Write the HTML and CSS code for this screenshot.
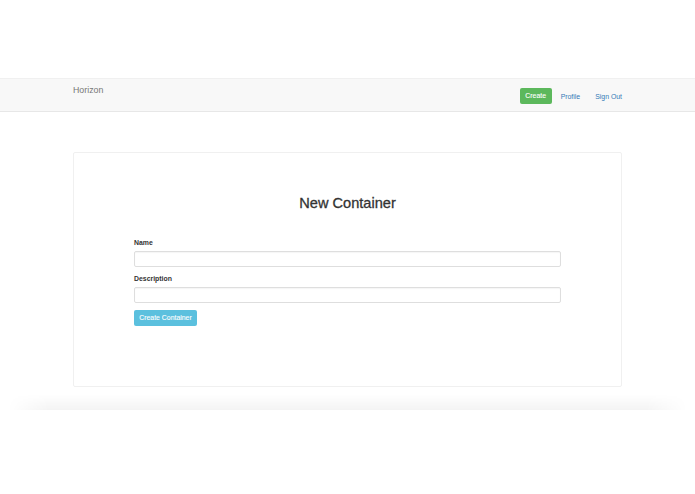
FILE: index.html
```
<!DOCTYPE html>
<html lang="en">
<head>
    <meta charset="UTF-8">
    <meta name="viewport" content="width=device-width, initial-scale=1.0">
    <title>Horizon</title>
    <link rel="stylesheet" href="styles.css">
</head>
<body>
    <nav class="navbar">
        <div class="container nav-inner">
            <a class="brand" href="#">Horizon</a>
            <div class="nav-links">
                <a class="btn btn-success" href="#">Create</a>
                <a class="nav-link" href="#">Profile</a>
                <a class="nav-link" href="#">Sign Out</a>
            </div>
        </div>
    </nav>

    <div class="container">
        <div class="card">
            <h1 class="card-title">New Container</h1>
            <form class="new-form">
                <label for="name">Name</label>
                <input type="text" id="name" class="form-control">
                <label for="description">Description</label>
                <input type="text" id="description" class="form-control">
                <button type="button" class="btn btn-info">Create Container</button>
            </form>
        </div>
    </div>

    <div class="fade-band"></div>
</body>
</html>
```

FILE: styles.css
```
body {
    margin: 0;
    padding-top: 78px;
    background: #fff;
    font-family: "Liberation Sans", Arial, sans-serif;
    font-size: 6.9px;
    color: #333;
}

.container {
    width: 549px;
    margin: 0 auto;
}

.navbar {
    height: 32px;
    background-color: #f8f8f8;
    border-top: 1px solid #f0f0f0;
    border-bottom: 1px solid #e7e7e7;
}

.nav-inner {
    display: flex;
    justify-content: space-between;
    align-items: flex-start;
}

.brand {
    padding-top: 6px;
    font-size: 8.8px;
    line-height: 10px;
    color: #777;
    text-decoration: none;
}

.nav-links {
    display: flex;
    align-items: center;
    padding-top: 9px;
}

.btn {
    display: inline-block;
    height: 16px;
    line-height: 16px;
    padding: 0 6px;
    border: none;
    border-radius: 2px;
    color: #fff;
    font-family: inherit;
    font-size: 6.9px;
    text-decoration: none;
    -webkit-text-stroke: 0.1px #fff;
}

.btn-success {
    width: 32px;
    padding: 0;
    text-align: center;
    background-color: #5cb85c;
    margin-right: 9px;
}

.nav-link {
    color: #337ab7;
    text-decoration: none;
    margin-right: 15px;
}

.nav-link:last-child {
    margin-right: 0;
}

.card {
    margin-top: 40px;
    padding-top: 42px;
    box-sizing: border-box;
    height: 235px;
    border: 1px solid #f0f0f0;
    border-radius: 2px;
}

.card-title {
    margin: 0;
    text-align: center;
    font-size: 14.6px;
    line-height: 17px;
    font-weight: normal;
    color: #333;
    -webkit-text-stroke: 0.3px #333;
}

.new-form {
    width: 427px;
    margin: 26px auto 0;
    display: flex;
    flex-direction: column;
    align-items: flex-start;
}

.new-form label {
    font-weight: bold;
    line-height: 9px;
    margin-bottom: 3.5px;
    color: #333;
}

.form-control {
    width: 100%;
    height: 16px;
    box-sizing: border-box;
    border: 1px solid #dedede;
    border-radius: 2px;
    box-shadow: inset 0 1px 1px rgba(0, 0, 0, 0.04);
    margin: 0 0 7.5px;
    padding: 0 4px;
}

.btn-info {
    width: 63px;
    padding: 0;
    text-align: center;
    background-color: #5bc0de;
    margin-top: -0.5px;
}

.fade-band {
    height: 16px;
    margin: 7px 8px 0;
    background: linear-gradient(to bottom, rgba(0, 0, 0, 0), rgba(0, 0, 0, 0.045));
    -webkit-mask-image: linear-gradient(to right, transparent, #000 6%, #000 94%, transparent);
    mask-image: linear-gradient(to right, transparent, #000 6%, #000 94%, transparent);
}
```
